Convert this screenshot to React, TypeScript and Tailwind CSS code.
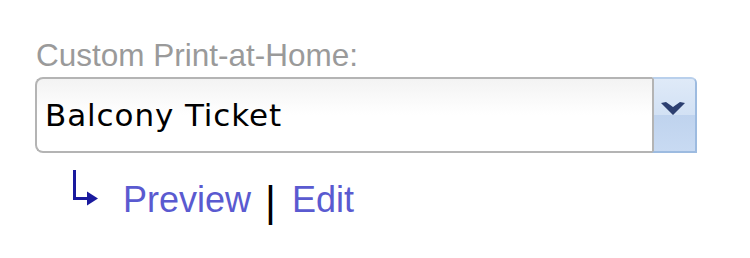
import React from "react";

export default function App() {
  return (
    <div className="w-[750px] h-[258px] bg-white relative overflow-hidden">
      <div className="pt-[37px] pl-[35px] w-[698px]">
        <div className="text-[31.5px] leading-[36px] text-[#9a9a9a] pl-[1px]" style={{ fontFamily: '"Liberation Sans", Arial, sans-serif' }}>
          Custom Print-at-Home:
        </div>
        <div className="mt-[4px] flex h-[76px] w-[662px]">
          <div className="flex-1 flex items-center border-2 border-[#b4b4b4] border-r-0 rounded-l-[8px] bg-gradient-to-b from-[#f3f3f3] via-white to-white pl-[8px]">
            <span className="text-[31px] tracking-[0.9px] text-black" style={{ fontFamily: '"DejaVu Sans", Verdana, sans-serif' }}>Balcony Ticket</span>
          </div>
          <div className="w-[45px] border-2 border-l-[#b4b4b4] border-t-[#b9d0ec] border-r-[#9dbbe0] border-b-[#9dbbe0] rounded-tr-[6px] flex flex-col relative bg-[#c4d8f0]">
            <div className="h-[36px] bg-gradient-to-b from-[#dfeaf8] to-[#d2e1f4] rounded-tr-[4px]"></div>
            <div className="flex-1 bg-gradient-to-b from-[#bfd3ee] to-[#c8daf2]"></div>
            <svg className="absolute left-[7px] top-[22px]" width="26" height="16" viewBox="0 0 26 16">
              <path d="M0 2 L5 1 L12 6 L19 1 L24 2 L12 14 Z" fill="#2c3f70" />
            </svg>
          </div>
        </div>
        <div className="mt-[15px] flex items-start pl-[35px]">
          <svg width="30" height="40" viewBox="0 0 30 40" className="shrink-0">
            <path d="M4.5 2 V30.5 H19" fill="none" stroke="#1a1a9e" strokeWidth="3" />
            <path d="M17 23.5 L28 30.5 L17 37.5 Z" fill="#1a1a9e" />
          </svg>
          <div className="ml-[23px] mt-[10px] flex items-center text-[36px] leading-[40px]" style={{ fontFamily: '"Liberation Sans", Arial, sans-serif' }}>
            <span className="text-[#5a5ad0]">Preview</span>
            <span className="text-black text-[42px] leading-[40px] mt-[4px] ml-[14px] mr-[16px]">|</span>
            <span className="text-[#5a5ad0]">Edit</span>
          </div>
        </div>
      </div>
    </div>
  );
}
